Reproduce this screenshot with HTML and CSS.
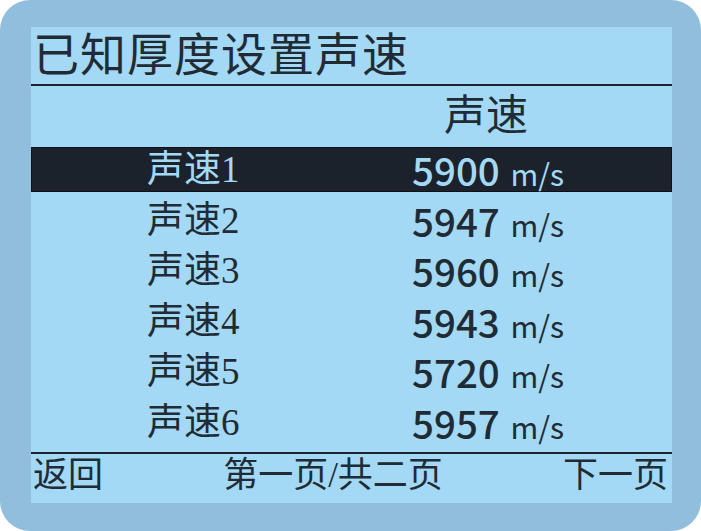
FILE: index.html
```html
<!DOCTYPE html>
<html lang="zh">
<head>
<meta charset="utf-8">
<link rel="stylesheet" href="styles.css">
</head>
<body>
<div class="device">
  <div class="screen">
    <div class="title">已知厚度设置声速</div>
    <div class="rule"></div>
    <div class="header"><span class="header-text">声速</span></div>
    <div class="list">
      <div class="row selected"><span class="label">声速1</span><span class="value">5900 <span class="unit">m/s</span></span></div>
      <div class="row"><span class="label">声速2</span><span class="value">5947 <span class="unit">m/s</span></span></div>
      <div class="row"><span class="label">声速3</span><span class="value">5960 <span class="unit">m/s</span></span></div>
      <div class="row"><span class="label">声速4</span><span class="value">5943 <span class="unit">m/s</span></span></div>
      <div class="row"><span class="label">声速5</span><span class="value">5720 <span class="unit">m/s</span></span></div>
      <div class="row"><span class="label">声速6</span><span class="value">5957 <span class="unit">m/s</span></span></div>
    </div>
    <div class="rule"></div>
    <div class="footer">
      <span>返回</span>
      <span>第一页/共二页</span>
      <span>下一页</span>
    </div>
  </div>
</div>
</body>
</html>
```
FILE: styles.css
```css
html, body {
  margin: 0;
  padding: 0;
  background: #ffffff;
}
.device {
  width: 701px;
  height: 531px;
  box-sizing: border-box;
  border-radius: 30px;
  background: #92bedd;
  padding: 27px 29px 28px 31px;
}
.screen {
  width: 641px;
  height: 476px;
  background: #a3d9f5;
  display: flex;
  flex-direction: column;
  color: #1f2c35;
  font-family: "Liberation Serif", "Noto Sans CJK SC", serif;
}
.title {
  height: 57px;
  font-size: 46px;
  line-height: 57px;
  padding-left: 2px;
  letter-spacing: 1px;
}
.rule {
  height: 2px;
  background: #1b242c;
  flex: none;
}
.header {
  height: 61px;
  display: flex;
  align-items: center;
  padding-left: 413px;
  font-size: 42px;
  line-height: 1.1;
}
.list {
  display: flex;
  flex-direction: column;
  gap: 5.5px;
  height: 305px;
  flex: none;
}
.row {
  height: 45px;
  display: flex;
  align-items: center;
  box-sizing: border-box;
  flex: none;
  line-height: 1;
}
.row.selected {
  background: #1b222b;
  color: #a3d9f5;
  border: 1px solid #0d1117;
}
.label {
  width: 265px;
  padding-left: 116px;
  font-size: 37px;
  box-sizing: content-box;
}
.row.selected .label {
  padding-left: 115px;
}
.value {
  font-family: "Noto Sans CJK SC", sans-serif;
  font-size: 38.5px;
  font-weight: 500;
}
.unit {
  font-size: 30px;
  font-weight: 400;
  margin-left: 2px;
}
.footer {
  flex: 1;
  display: flex;
  justify-content: space-between;
  align-items: center;
  padding: 0 4px 4px 2px;
  font-size: 35px;
  line-height: 1.1;
}
```
